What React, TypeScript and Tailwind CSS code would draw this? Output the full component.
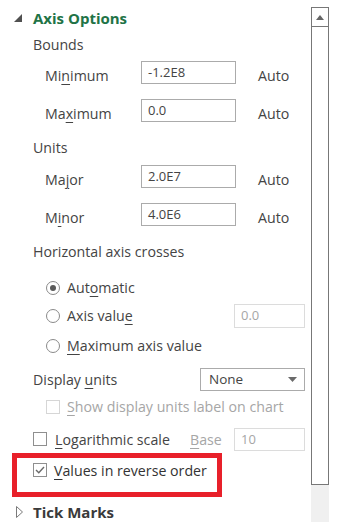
import React from "react";

const font = { fontFamily: '"Open Sans", "Noto Sans", sans-serif' };

const U: React.FC<{ children: React.ReactNode }> = ({ children }) => (
  <span className="underline underline-offset-[3px] decoration-1">{children}</span>
);

const NumBox: React.FC<{ value: string; w: string; disabled?: boolean }> = ({ value, w, disabled }) => (
  <div
    className={`${w} h-full flex items-center pl-[6px] text-[13px] border ${
      disabled ? "border-[#dcdcdc] text-[#a6a6a6]" : "border-[#ababab] text-[#444]"
    }`}
  >
    {value}
  </div>
);

const Radio: React.FC<{ checked?: boolean }> = ({ checked }) => (
  <div className="w-[14px] h-[14px] rounded-full border border-[#8a8a8a] flex items-center justify-center bg-white">
    {checked && <div className="w-[6px] h-[6px] rounded-full bg-[#5a5a5a]" />}
  </div>
);

const Check: React.FC<{ checked?: boolean; disabled?: boolean }> = ({ checked, disabled }) => (
  <div
    className={`w-[14px] h-[14px] border flex items-center justify-center ${
      disabled ? "border-[#d6d6d6]" : "border-[#8f8f8f]"
    }`}
  >
    {checked && (
      <svg width="10" height="8" viewBox="0 0 10 8">
        <polyline points="1,4 3.8,6.8 9,1" fill="none" stroke="#6a6a6a" strokeWidth="1.4" />
      </svg>
    )}
  </div>
);

const ValueRow: React.FC<{ label: React.ReactNode; value: string; mt: string }> = ({ label, value, mt }) => (
  <div className={`${mt} h-[23px] flex items-center`}>
    <div className="w-[141px] pl-[45px] pt-[6px]">{label}</div>
    <NumBox value={value} w="w-[95px]" />
    <div className="ml-[22px] pt-[6px]">Auto</div>
  </div>
);

export default function App() {
  return (
    <div className="w-[352px] h-[522px] bg-white flex overflow-hidden text-[14.2px] text-[#444]" style={font}>
      <div className="w-[311px] flex flex-col">
        <div className="mt-[8px] h-[20px] flex items-center">
          <svg className="ml-[14px]" width="8" height="8" viewBox="0 0 8 8">
            <polygon points="8,0 8,8 0,8" fill="#505050" />
          </svg>
          <span className="ml-[11px] font-bold text-[15px] text-[#217346]">Axis Options</span>
        </div>

        <div className="mt-[7px] h-[20px] flex items-center pl-[33px]">Bounds</div>
        <ValueRow mt="mt-[6px]" label={<>Mi<U>n</U>imum</>} value="-1.2E8" />
        <ValueRow mt="mt-[15px]" label={<>Ma<U>x</U>imum</>} value="0.0" />

        <div className="mt-[16px] h-[20px] flex items-center pl-[33px]">Units</div>
        <ValueRow mt="mt-[7px]" label={<>Ma<U>j</U>or</>} value="2.0E7" />
        <ValueRow mt="mt-[15px]" label={<>M<U>i</U>nor</>} value="4.0E6" />

        <div className="mt-[16px] h-[20px] flex items-center pl-[33px]">Horizontal axis crosses</div>

        <div className="mt-[16px] h-[20px] flex items-center pl-[46px]">
          <Radio checked />
          <span className="ml-[7px]">
            Aut<U>o</U>matic
          </span>
        </div>
        <div className="mt-[6px] h-[24px] flex items-center pl-[46px]">
          <Radio />
          <span className="ml-[7px] w-[167px]">
            Axis valu<U>e</U>
          </span>
          <NumBox value="0.0" w="w-[71px]" disabled />
        </div>
        <div className="mt-[8px] h-[20px] flex items-center pl-[46px]">
          <Radio />
          <span className="ml-[7px]">
            <U>M</U>aximum axis value
          </span>
        </div>

        <div className="mt-[12px] h-[23px] flex items-center pl-[33px]">
          <span className="w-[167px]">
            Display <U>u</U>nits
          </span>
          <div className="w-[105px] h-full border border-[#ababab] flex items-center justify-between pl-[8px] pr-[7px] text-[13.5px]">
            <span>None</span>
            <svg width="9" height="5" viewBox="0 0 9 5">
              <polygon points="0,0 9,0 4.5,5" fill="#6a6a6a" />
            </svg>
          </div>
        </div>

        <div className="mt-[6px] h-[20px] flex items-center pl-[46px] text-[#a6a6a6]">
          <Check disabled />
          <span className="ml-[7px]">
            <U>S</U>how display units label on chart
          </span>
        </div>

        <div className="mt-[11px] h-[24px] flex items-center pl-[33px]">
          <Check />
          <span className="ml-[8px] w-[135px]">
            <U>L</U>ogarithmic scale
          </span>
          <span className="w-[44px] text-[#a6a6a6]">
            <U>B</U>ase
          </span>
          <NumBox value="10" w="w-[71px]" disabled />
        </div>

        <div className="mt-[2px] ml-[12px] w-[210px] h-[44px] border-[5px] border-[#e8202a] pt-[2px]">
          <div className="h-[20px] flex items-center pl-[16px]">
            <Check checked />
            <span className="ml-[7px] text-[#333]">
              <U>V</U>alues in reverse order
            </span>
          </div>
        </div>

        <div className="mt-[5px] h-[20px] flex items-center">
          <svg className="ml-[16px]" width="7" height="12" viewBox="0 0 7 12">
            <polygon points="0.5,0.5 6.5,6 0.5,11.5" fill="none" stroke="#7a7a7a" strokeWidth="1" />
          </svg>
          <span className="ml-[10px] font-bold text-[15px] text-[#3a3a3a]">Tick Marks</span>
        </div>
      </div>

      <div className="w-[18px] flex flex-col mt-[7px]">
        <div className="h-[20px] border border-[#777] flex items-center justify-center">
          <svg width="8" height="5" viewBox="0 0 8 5">
            <polygon points="0,5 8,5 4,0" fill="#666" />
          </svg>
        </div>
        <div className="h-[458px] border border-t-0 border-[#777]" />
        <div className="flex-1 bg-[#f0f0f0]" />
      </div>
    </div>
  );
}
